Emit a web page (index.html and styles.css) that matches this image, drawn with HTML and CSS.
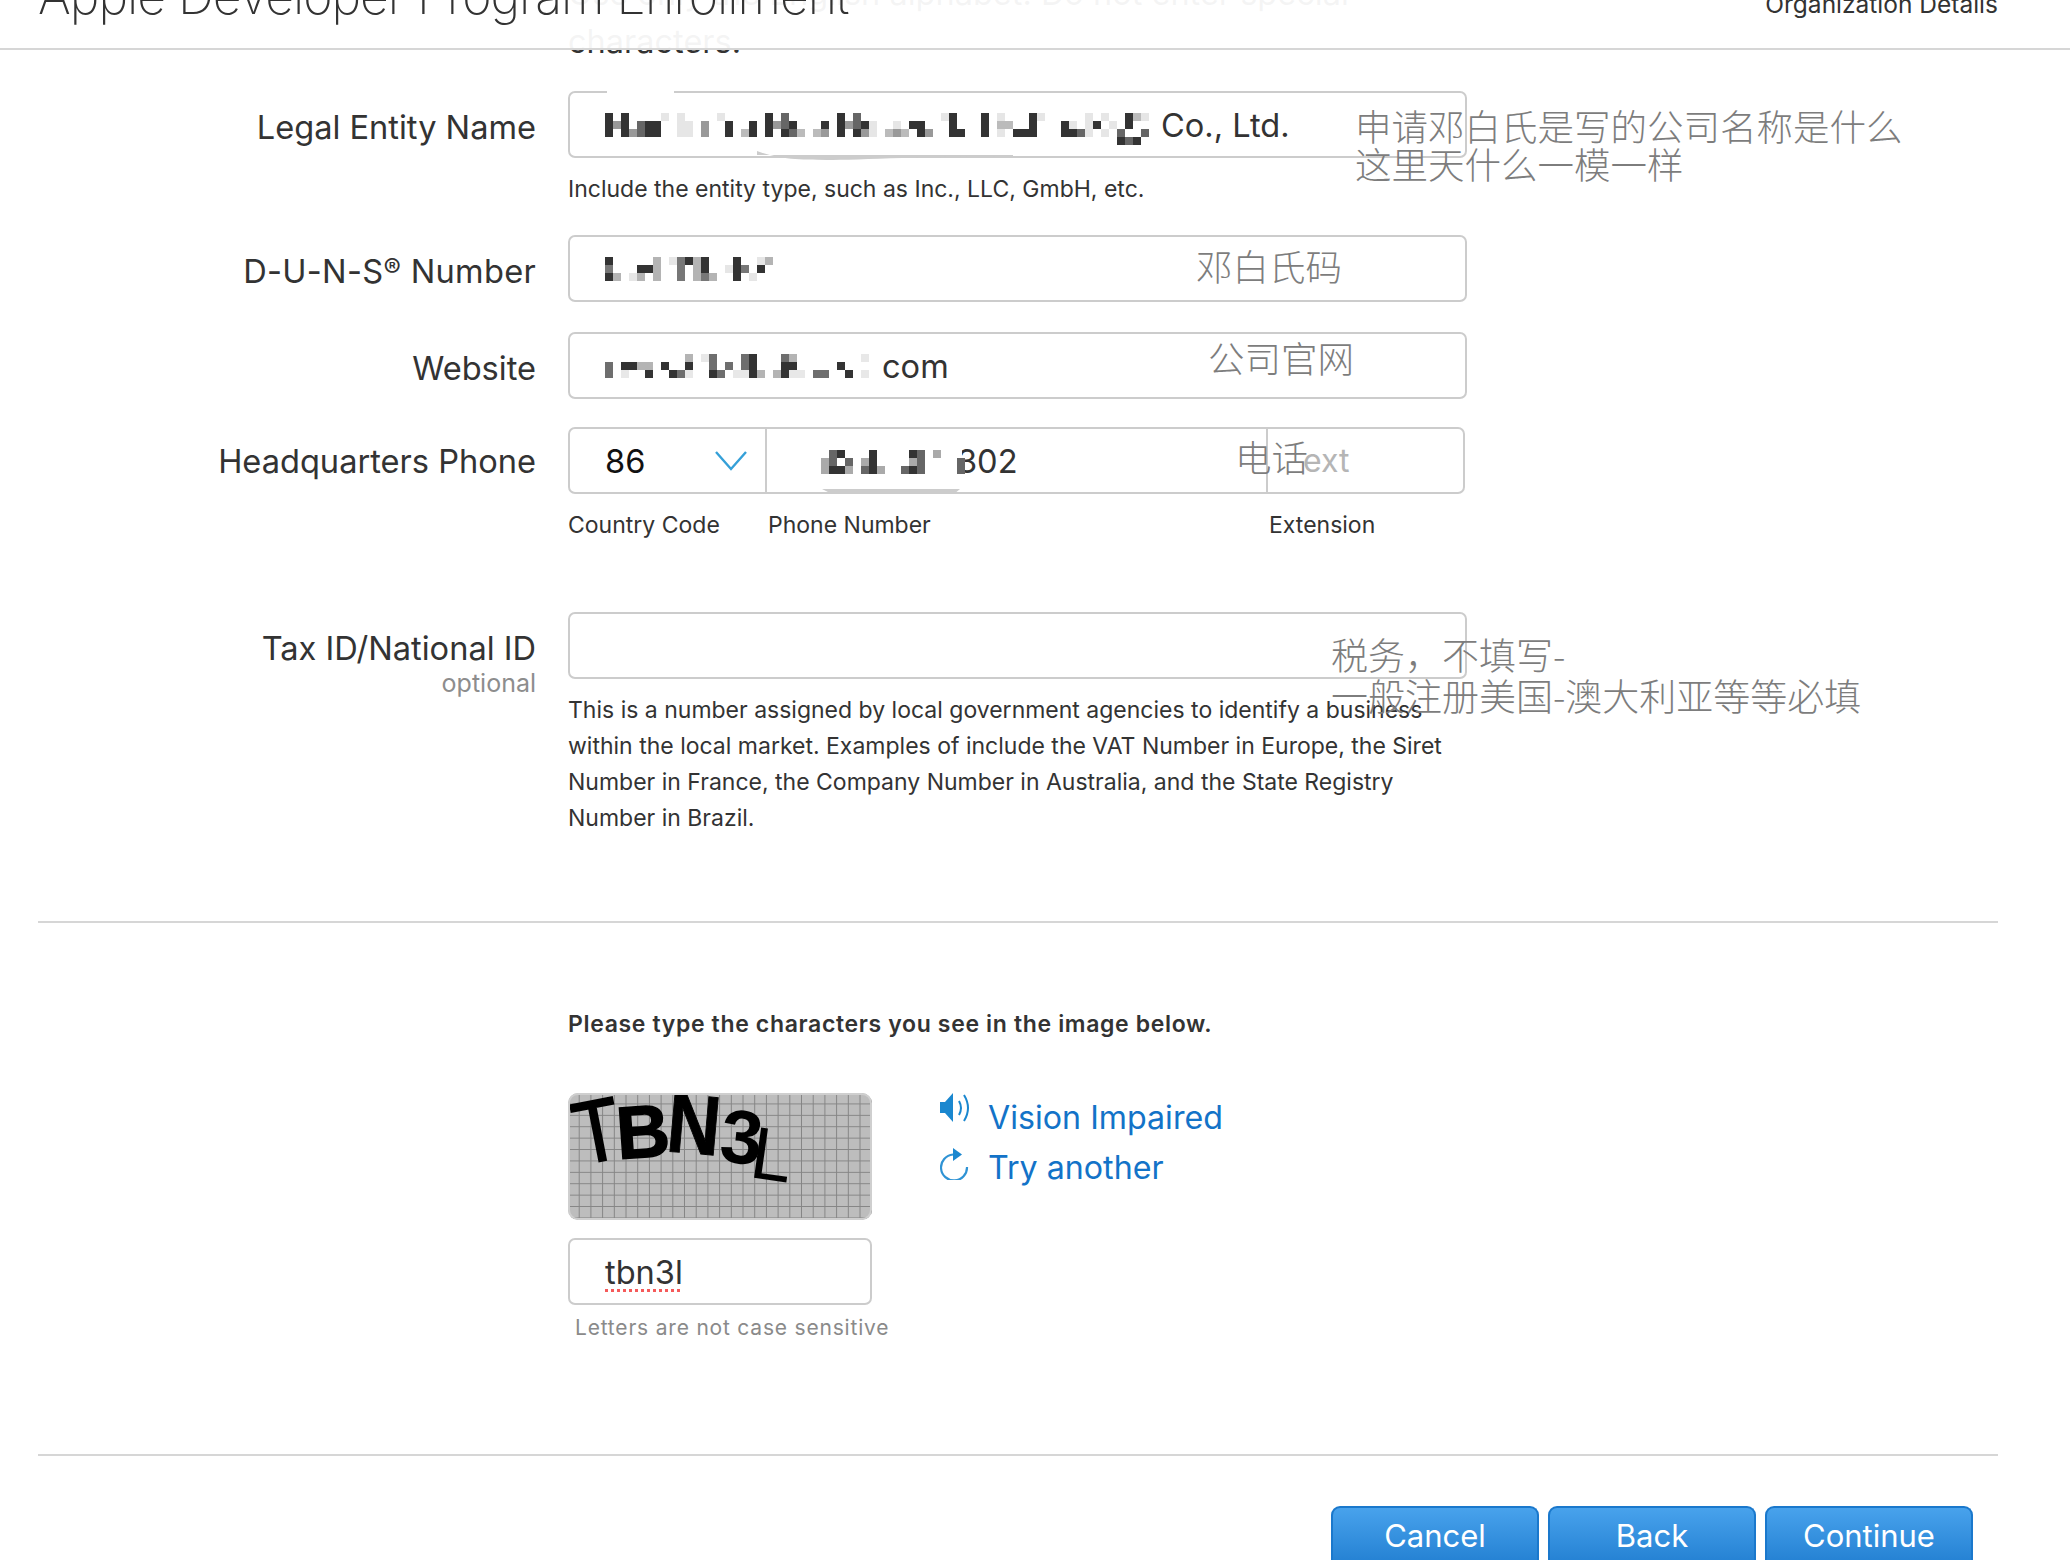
FILE: index.html
```html
<!DOCTYPE html>
<html lang="en">
<head>
<meta charset="utf-8">
<title>Apple Developer Program Enrollment</title>
<link rel="stylesheet" href="styles.css">
</head>
<body>
<div class="page">
  <header class="top">
    <h1 class="title">Apple Developer Program Enrollment</h1>
    <span class="step">Organization Details</span>
  </header>

  <main class="form">
    <p class="intro">Use only the English alphabet. Do not enter special<br>characters.</p>

    <section class="row row-legal">
      <label class="label">Legal Entity Name</label>
      <div class="field">
        <div class="box">
          <svg class="mosaic mosaic-legal" width="552" height="32" viewBox="0 0 552 32">
            <path fill="#333" d="M0 0h8v24h-8zM16 0h8v24h-8zM40 8h16v16h-16zM120 8h8v16h-8zM144 8h8v16h-8zM160 0h8v24h-8zM176 16h8v8h-8zM184 8h8v8h-8zM216 8h8v8h-8zM232 0h8v24h-8zM248 16h8v8h-8zM256 8h8v8h-8zM304 8h8v8h-8zM312 8h8v16h-8zM344 0h8v24h-8zM352 16h8v8h-8zM376 0h8v24h-8zM408 16h16v8h-16zM424 0h8v24h-8zM456 8h8v16h-8zM464 16h8v8h-8zM488 8h8v8h-8zM520 0h8v16h-8zM512 24h8v8h-8zM528 24h8v8h-8z"/>
            <path fill="#666" d="M32 8h8v16h-8zM176 0h8v16h-8zM184 16h8v8h-8zM248 0h8v16h-8zM472 16h8v8h-8zM512 16h8v8h-8zM536 16h8v8h-8zM520 24h8v8h-8z"/>
            <path fill="#999" d="M8 8h8v8h-8zM24 16h8v8h-8zM96 8h8v16h-8zM168 8h8v8h-8zM216 16h8v8h-8zM240 8h8v8h-8zM288 16h8v8h-8zM320 16h8v8h-8zM256 16h8v8h-8z"/>
            <path fill="#bbb" d="M136 16h8v8h-8zM192 16h8v8h-8zM280 16h8v8h-8zM400 8h8v8h-8zM392 8h8v8h-8zM528 0h8v8h-8zM296 16h8v8h-8zM208 16h8v8h-8z"/>
            <path fill="#e6e6e6" d="M56 0h8v8h-8zM72 0h8v24h-8zM80 8h8v16h-8zM112 0h8v8h-8zM264 8h8v16h-8zM288 8h8v8h-8zM336 0h8v8h-8zM392 0h8v8h-8zM392 16h8v8h-8zM432 0h8v8h-8zM464 8h8v8h-8zM480 0h8v24h-8zM496 0h8v8h-8zM496 16h8v8h-8zM504 8h8v8h-8zM536 0h8v8h-8z"/>
          </svg>
          <span class="value value-legal">Co., Ltd.</span>
          <span class="gap gap-legal"></span>
          <svg class="swoosh swoosh-legal" width="256" height="10" viewBox="0 0 256 10"><path fill="#ccc" d="M0 0C20 8 40 9 70 9S180 5 256 5V4H0z"/></svg>
        </div>
        <p class="hint hint-legal">Include the entity type, such as Inc., LLC, GmbH, etc.</p>
      </div>
    </section>

    <section class="row row-duns">
      <label class="label label-duns">D-U-N-S<sup class="reg">®</sup> Number</label>
      <div class="field">
        <div class="box">
          <svg class="mosaic" width="168" height="24" viewBox="0 0 168 24">
            <path fill="#333" d="M0 0h8v8h-8zM0 16h8v8h-8zM32 8h16v8h-16zM80 0h8v8h-8zM96 0h8v16h-8zM128 0h8v24h-8zM152 8h8v8h-8z"/>
            <path fill="#777" d="M0 8h8v8h-8zM72 0h8v24h-8zM96 16h8v8h-8zM136 8h8v8h-8z"/>
            <path fill="#b4b4b4" d="M8 16h8v8h-8zM32 16h8v8h-8zM48 0h8v24h-8zM88 0h8v24h-8zM104 16h8v8h-8zM160 0h8v8h-8z"/>
            <path fill="#e6e6e6" d="M24 16h8v8h-8zM64 0h8v8h-8zM120 8h8v8h-8zM144 16h8v8h-8zM152 0h8v8h-8z"/>
          </svg>
        </div>
      </div>
    </section>

    <section class="row row-web">
      <label class="label">Website</label>
      <div class="field">
        <div class="box">
          <svg class="mosaic" width="272" height="24" viewBox="0 0 272 24">
            <path fill="#333" d="M16 8h16v8h-16zM40 16h8v8h-8zM56 8h8v8h-8zM64 16h8v8h-8zM80 8h8v8h-8zM104 16h8v8h-8zM144 0h8v24h-8zM176 8h8v16h-8zM184 8h8v8h-8zM232 8h8v8h-8zM240 16h8v8h-8z"/>
            <path fill="#6e6e6e" d="M0 8h8v16h-8zM72 16h8v8h-8zM104 0h8v16h-8zM112 16h8v8h-8zM120 8h8v8h-8zM136 0h8v16h-8zM176 0h8v8h-8zM208 16h16v8h-16z"/>
            <path fill="#b4b4b4" d="M32 8h16v8h-16zM80 0h8v8h-8zM152 16h8v8h-8zM168 16h8v8h-8zM184 0h8v8h-8z"/>
            <path fill="#e8e8e8" d="M16 16h8v8h-8zM80 16h8v8h-8zM96 0h8v8h-8zM128 16h8v8h-8zM136 16h8v8h-8zM184 16h16v8h-16zM256 0h8v8h-8zM256 16h8v8h-8z"/>
          </svg>
          <span class="value value-web">com</span>
        </div>
      </div>
    </section>

    <section class="row row-phone">
      <label class="label label-phone">Headquarters Phone</label>
      <div class="field">
        <div class="box box-phone">
          <div class="cell cell-code">
            <span class="value value-code">86</span>
            <svg class="chevron" width="32" height="20" viewBox="0 0 32 20"><path fill="none" stroke="#35a0d8" stroke-width="2.4" d="M1 1l15 17L31 1"/></svg>
          </div>
          <div class="cell cell-number">
            <span class="value value-number">302</span>
            <svg class="mosaic mosaic-phone" width="144" height="24" viewBox="0 0 144 24">
              <path fill="#fff" d="M0 0h141v24H0z"/>
              <path fill="#333" d="M16 0h8v8h-8zM16 16h8v8h-8zM8 16h8v8H8zM48 0h8v24h-8zM88 0h8v8h-8zM88 16h8v8h-8z"/>
              <path fill="#666" d="M8 0h8v16H8zM24 8h8v8h-8zM40 16h8v8h-8zM80 16h8v8h-8zM96 0h8v24h-8zM136 8h8v16h-8z"/>
              <path fill="#aaa" d="M0 8h8v16H0zM24 16h8v8h-8zM40 8h8v8h-8zM56 16h8v8h-8zM88 8h8v8h-8zM112 0h8v8h-8z"/>
            </svg>
            <svg class="swoosh swoosh-phone" width="138" height="5" viewBox="0 0 138 5"><path fill="#ccc" d="M0 0h138l-6 5H10z"/></svg>
          </div>
          <div class="cell cell-ext"><span class="placeholder">ext</span></div>
        </div>
        <div class="sublabels">
          <span class="sub sub-code">Country Code</span>
          <span class="sub sub-number">Phone Number</span>
          <span class="sub">Extension</span>
        </div>
      </div>
    </section>

    <section class="row row-tax">
      <div class="label label-tax">
        <label>Tax ID/National ID</label>
        <span class="optional">optional</span>
      </div>
      <div class="field">
        <div class="box"></div>
        <p class="hint hint-tax">This is a number assigned by local government agencies to identify a business<br>within the local market. Examples of include the VAT Number in Europe, the Siret<br>Number in France, the Company Number in Australia, and the State Registry<br>Number in Brazil.</p>
      </div>
    </section>

    <hr class="rule rule-one">

    <section class="captcha">
      <p class="captcha-title">Please type the characters you see in the image below.</p>
      <div class="captcha-main">
        <div class="captcha-left">
          <svg class="captcha-image" width="304" height="127" viewBox="0 0 304 127">
            <defs>
              <pattern id="mesh" width="11.7" height="11.4" patternUnits="userSpaceOnUse">
                <path fill="none" stroke="#858585" stroke-width="2" d="M11.7 0V11.4M0 11.4H11.7"/>
              </pattern>
            </defs>
            <rect width="304" height="127" fill="#bdbdbd"/>
            <rect width="304" height="127" fill="url(#mesh)"/>
            <g class="captcha-letters">
              <text class="cl cl-t" transform="translate(12 72) rotate(-11) scale(.86 1)">T</text>
              <text class="cl cl-b" transform="translate(50 66) rotate(-4)">B</text>
              <text class="cl cl-n" transform="translate(97 58) rotate(5) scale(.88 1)">N</text>
              <text class="cl cl-3" transform="translate(150 68) rotate(6)">3</text>
              <text class="cl cl-l" transform="translate(180 84) rotate(8)">L</text>
            </g>
            <rect class="captcha-edge" x="1" y="1" width="302" height="125" rx="9"/>
          </svg>
          <div class="box box-captcha"><span class="value value-captcha">tbn3l</span></div>
          <p class="case">Letters are not case sensitive</p>
        </div>
        <div class="captcha-links">
          <a class="link link-first">
            <svg class="link-icon" width="30" height="30" viewBox="0 0 30 30">
              <path fill="#1a87cf" d="M0 9h5L13 0v29L5 20H0z"/>
              <path fill="none" stroke="#1a87cf" stroke-width="2" d="M19 8q4 7 0 14M24 2q8 13 0 26"/>
            </svg>
            <span class="link-text">Vision Impaired</span>
          </a>
          <a class="link">
            <svg class="link-icon" width="30" height="32" viewBox="0 0 30 32">
              <path fill="none" stroke="#2f93d4" stroke-width="2.2" d="M13 6.500A13 13 0 1 0 27 19"/>
              <path fill="#1a87cf" d="M13 0l9 6.500-9 6.500z"/>
            </svg>
            <span class="link-text">Try another</span>
          </a>
        </div>
      </div>
    </section>

    <hr class="rule rule-two">

    <nav class="actions">
      <button class="btn">Cancel</button>
      <button class="btn">Back</button>
      <button class="btn">Continue</button>
    </nav>
  </main>

  <div class="memo memo-legal">申请邓白氏是写的公司名称是什么<br>这里天什么一模一样</div>
  <div class="memo memo-duns">邓白氏码</div>
  <div class="memo memo-web">公司官网</div>
  <div class="memo memo-phone">电话</div>
  <div class="memo memo-tax">税务，不填写-<br>一般注册美国-澳大利亚等等必填</div>
</div>
</body>
</html>
```

FILE: styles.css
```css
* { box-sizing: border-box; }
html, body { margin: 0; padding: 0; background: #fff; }
body {
  font-family: Inter, "Noto Sans CJK SC", sans-serif;
  color: #333;
  overflow: hidden;
}
.page { position: relative; width: 2070px; height: 1560px; overflow: hidden; }

.top {
  position: absolute; left: 0; top: 0; width: 100%; height: 50px;
  display: flex; justify-content: space-between; align-items: flex-end;
  padding: 0 72px 0 38px;
  background: rgba(255,255,255,.95);
  border-bottom: 2px solid #d6d6d6;
  overflow: hidden;
  z-index: 2;
}
.title { margin: 0 0 22px; font-size: 50px; line-height: 60px; letter-spacing: -1px; font-weight: 200; color: #333; white-space: nowrap; }
.step { font-size: 24.500px; line-height: 30px; margin-bottom: 29px; color: #333; }

.form { padding: 0 72px 0 38px; margin-top: -30px; }
.intro { margin: 0 0 25px 530px; font-size: 32.500px; line-height: 48px; color: #333; white-space: nowrap; }

.row { display: grid; grid-template-columns: 496px 899px; column-gap: 34px; }
.row-duns { margin-top: 28px; }
.row-web { margin-top: 30px; }
.row-phone { margin-top: 28px; }
.row-tax { margin-top: 69px; }

.label { display: block; text-align: right; font-size: 32.600px; line-height: 62px; padding-top: 5px; margin-right: -2px; color: #333; white-space: nowrap; }
.label-duns { letter-spacing: .3px; }
.label-phone { padding-top: 3px; }
.reg { font-size: 26px; line-height: 0; vertical-align: 6px; }
.label-tax { display: flex; flex-direction: column; }
.optional { font-size: 25px; line-height: 30px; color: #8d8d8d; margin-top: -11px; }

.field { position: relative; }
.box {
  position: relative; display: flex; align-items: center;
  height: 67px; border: 2px solid #ccc; border-radius: 7px;
  padding-left: 35px; background: #fff;
}
.mosaic { flex: none; filter: blur(.5px); }
.mosaic-legal { margin-top: 8px; }
.value { font-size: 32.600px; line-height: 40px; color: #333; white-space: nowrap; }
.value-legal { margin-left: 4px; position: relative; top: 0; }
.value-web { margin-left: 5px; position: relative; top: 0; }

.gap { position: absolute; background: #fff; }
.gap-legal { left: 37px; top: -2px; width: 67px; height: 2px; }
.swoosh { position: absolute; }
.swoosh-legal { left: 187px; top: 58px; }
.swoosh-phone { left: 55px; bottom: -2px; }

.hint { margin: 0; font-size: 23px; line-height: 36px; color: #333; }
.hint-legal { margin-top: 13px; }
.hint-tax { margin-top: 13px; white-space: nowrap; }

.box-phone { width: 897px; padding: 0; align-items: stretch; }
.cell { display: flex; align-items: center; }
.cell-code { width: 197px; padding-left: 35px; justify-content: space-between; padding-right: 18px; border-right: 2px solid #ccc; }
.value-code { color: #111; }
.chevron { flex: none; }
.cell-number { position: relative; width: 501px; padding-left: 190px; border-right: 2px solid #ccc; }
.mosaic-phone { position: absolute; left: 54px; top: 21px; }
.cell-ext { flex: 1; padding-left: 35px; }
.placeholder { font-size: 32px; color: #b5b5b5; }

.sublabels { display: flex; margin-top: 13px; font-size: 23px; line-height: 36px; color: #333; }
.sub-code { width: 200px; }
.sub-number { width: 501px; }

.rule { border: 0; height: 2px; background: #d6d6d6; margin: 0; width: 1960px; }
.rule-one { margin-top: 85px; }
.rule-two { margin-top: 108px; }

.captcha { padding-left: 530px; }
.captcha-title { margin: 83px 0 51px; font-size: 23px; line-height: 36px; font-weight: 600; letter-spacing: .65px; color: #333; }
.captcha-main { display: flex; gap: 68px; }
.captcha-left { width: 304px; }
.captcha-image { display: block; border-radius: 10px; }
.captcha-edge { fill: none; stroke: #cfcfcf; stroke-width: 2px; }
.cl { font-family: "Liberation Sans", sans-serif; font-weight: 700; fill: #000; }
.cl-t { font-size: 88px; font-weight: 400; stroke: #000; stroke-width: 2px; }
.cl-b { font-size: 74px; stroke: #000; stroke-width: 1.500px; }
.cl-n { font-size: 84px; stroke: #000; stroke-width: 1px; }
.cl-3 { font-size: 76px; }
.cl-l { font-size: 74px; font-weight: 400; }
.box-captcha { margin-top: 18px; }
.value-captcha { text-decoration: underline dotted #f55a5a 3px; text-underline-offset: 5px; }
.case { margin: 5px 0 0 7px; font-size: 21px; line-height: 36px; letter-spacing: .8px; color: #8a8a8a; white-space: nowrap; }

.captcha-links { display: flex; flex-direction: column; gap: 10px; }
.link { display: flex; align-items: flex-start; gap: 18px; font-size: 32.200px; line-height: 40px; color: #1373c8; white-space: nowrap; }
.link-first .link-text { margin-top: 5px; }
.link-icon { flex: none; }

.actions { display: flex; justify-content: flex-end; gap: 9px; margin-top: 50px; padding-right: 25px; }
.btn {
  width: 208px; height: 72px; padding: 0 0 16px;
  border: 2px solid #1a78cc; border-bottom: 0; border-radius: 9px 9px 0 0;
  background: linear-gradient(#48a2ec, #1a78cc);
  font-family: Inter, sans-serif; font-size: 31px; color: #fff;
}

.memo { position: absolute; z-index: 3; font-family: "Noto Sans CJK SC", sans-serif; font-size: 36.500px; font-weight: 300; line-height: 38px; color: #7d7d7d; white-space: nowrap; }
.memo-legal { left: 1355px; top: 107px; }
.memo-duns { left: 1196px; top: 247px; }
.memo-web { left: 1208px; top: 339px; }
.memo-phone { left: 1235px; top: 438px; }
.memo-tax { left: 1331px; top: 634px; font-size: 37px; line-height: 41px; }
```
